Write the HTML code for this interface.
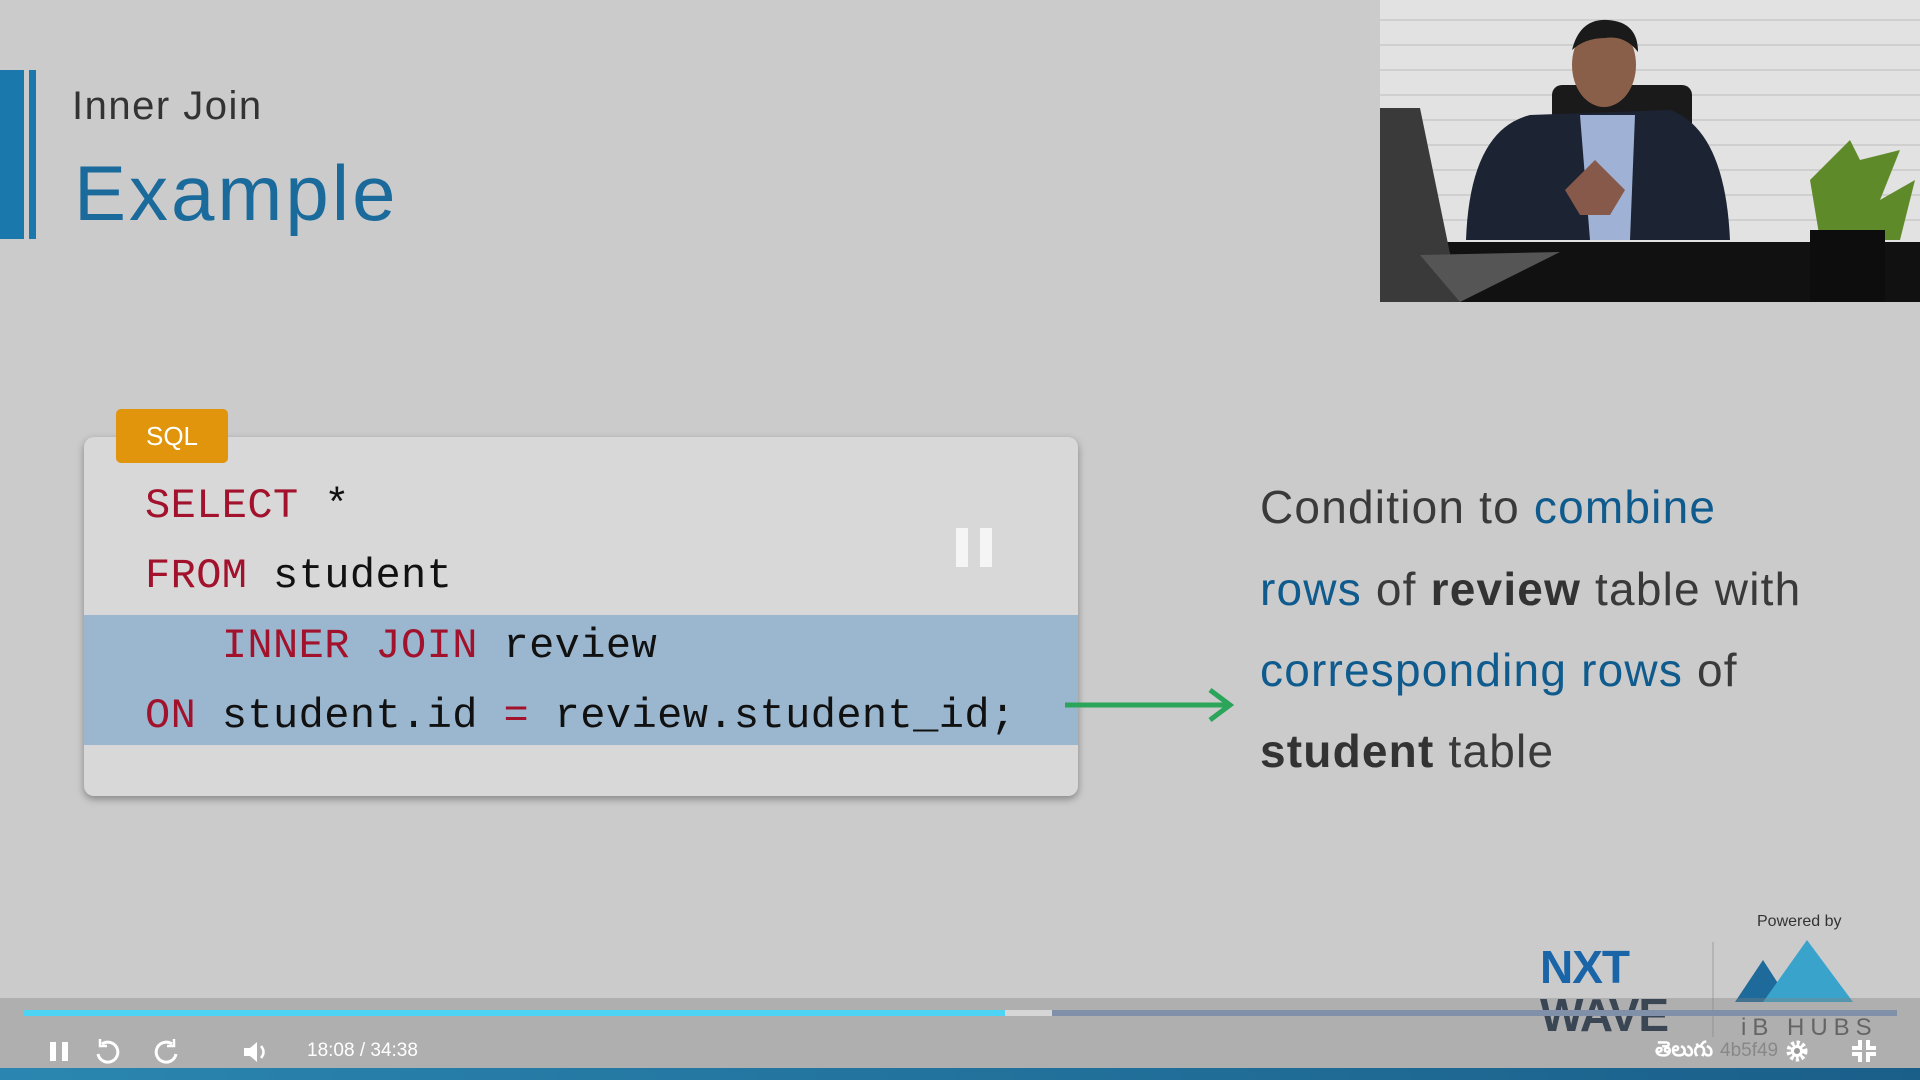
<!DOCTYPE html>
<html><head><meta charset="utf-8"><style>
*{margin:0;padding:0;box-sizing:border-box}
body{width:1920px;height:1080px;overflow:hidden;background:#cbcbcb;position:relative;font-family:"Liberation Sans",sans-serif}
.abs{position:absolute}
.mono{font-family:"Liberation Mono",monospace;font-size:42px;color:#111;white-space:pre;letter-spacing:0.4px}
.kw{color:#a3122c}
.rt{font-size:46px;color:#3a3a3a;white-space:nowrap;letter-spacing:1.2px}
.bl{color:#0f5b8e}
.bd{font-weight:bold;color:#333}
</style></head><body>
<div class="abs" style="left:0;top:70px;width:24px;height:169px;background:#1b78ad"></div>
<div class="abs" style="left:29px;top:70px;width:7px;height:169px;background:#1b78ad"></div>
<div class="abs" style="left:72px;top:84px;font-size:40px;color:#333;letter-spacing:1.5px">Inner Join</div>
<div class="abs" style="left:74px;top:148px;font-size:78px;color:#1a6a9c;letter-spacing:3px">Example</div>

<!-- video -->
<svg class="abs" style="left:1380px;top:0" width="540" height="302">
<rect width="540" height="302" fill="#e2e2e2"/>
<g stroke="#cfcfcf" stroke-width="2">
<line x1="0" y1="20" x2="540" y2="20"/><line x1="0" y1="45" x2="540" y2="45"/><line x1="0" y1="70" x2="540" y2="70"/><line x1="0" y1="95" x2="540" y2="95"/><line x1="0" y1="120" x2="540" y2="120"/><line x1="0" y1="145" x2="540" y2="145"/><line x1="0" y1="170" x2="540" y2="170"/><line x1="0" y1="195" x2="540" y2="195"/><line x1="0" y1="220" x2="540" y2="220"/></g>
<rect x="0" y="242" width="540" height="60" fill="#111"/>
<path d="M0 108 L40 108 L80 302 L0 302Z" fill="#3a3a3a"/>
<path d="M40 255 L180 252 L80 302Z" fill="#555"/>
<rect x="172" y="85" width="140" height="80" rx="10" fill="#1a1a1a"/>
<path d="M86 240 Q90 130 150 115 L290 110 Q345 130 350 240Z" fill="#1c2333"/>
<path d="M200 115 L255 115 L250 240 L210 240Z" fill="#9fb2d6"/>
<ellipse cx="224" cy="65" rx="32" ry="42" fill="#8a5f4a"/>
<path d="M192 50 Q200 18 228 20 Q258 22 258 52 Q245 35 225 38 Q205 38 192 50Z" fill="#1a1a1a"/>
<path d="M185 190 L215 160 L245 190 L230 215 L200 215Z" fill="#86594a"/>
<path d="M430 180 L470 140 L480 160 L520 150 L500 200 L535 180 L520 240 L440 240Z" fill="#5e8a2a"/>
<rect x="430" y="230" width="75" height="72" fill="#0d0d0d"/>
</svg>

<!-- code box -->
<div class="abs" style="left:84px;top:437px;width:994px;height:359px;background:#d8d8d8;border-radius:10px;box-shadow:0 3px 8px rgba(0,0,0,.35)"></div>
<div class="abs" style="left:84px;top:615px;width:994px;height:130px;background:#9bb7cf"></div>
<div class="abs" style="left:116px;top:409px;width:112px;height:54px;background:#e0950d;border-radius:5px;color:#fff;font-size:26px;text-align:center;line-height:54px">SQL</div>
<div class="abs mono" style="left:145px;top:482px"><span class="kw">SELECT</span> *</div>
<div class="abs mono" style="left:145px;top:552px"><span class="kw">FROM</span> student</div>
<div class="abs mono" style="left:145px;top:622px">   <span class="kw">INNER JOIN</span> review</div>
<div class="abs mono" style="left:145px;top:692px"><span class="kw">ON</span> student.id <span class="kw">=</span> review.student_id;</div>
<div class="abs" style="left:956px;top:528px;width:12px;height:39px;background:rgba(255,255,255,.75)"></div>
<div class="abs" style="left:980px;top:528px;width:12px;height:39px;background:rgba(255,255,255,.75)"></div>

<!-- arrow -->
<svg class="abs" style="left:1060px;top:685px" width="180" height="40">
<line x1="5" y1="20" x2="168" y2="20" stroke="#2aa55a" stroke-width="5"/>
<path d="M150 5 L170 20 L150 35" fill="none" stroke="#2aa55a" stroke-width="5"/>
</svg>

<div class="abs rt" style="left:1260px;top:480px">Condition to <span class="bl">combine</span></div>
<div class="abs rt" style="left:1260px;top:562px"><span class="bl">rows</span> of <span class="bd">review</span> table with</div>
<div class="abs rt" style="left:1260px;top:643px"><span class="bl">corresponding rows</span> of</div>
<div class="abs rt" style="left:1260px;top:724px"><span class="bd">student</span> table</div>

<!-- logos -->
<div class="abs" style="left:1757px;top:913px;font-size:16px;color:#333">Powered by</div>
<div class="abs" style="left:1540px;top:940px;font-size:46px;font-weight:bold;color:#1a64a8;letter-spacing:-1px">NXT</div>
<div class="abs" style="left:1540px;top:988px;font-size:46px;font-weight:bold;color:#0f2238;letter-spacing:-1px">WAVE</div>
<div class="abs" style="left:1712px;top:942px;width:2px;height:95px;background:#b5b5b5"></div>
<svg class="abs" style="left:1735px;top:940px" width="130" height="70">
<path d="M0 62 L28 20 L55 62Z" fill="#1e6a9a"/>
<path d="M28 62 L72 0 L118 62Z" fill="#3aa3cc"/>
</svg>
<div class="abs" style="left:1741px;top:1014px;font-size:24px;color:#555;letter-spacing:6px">iB HUBS</div>

<!-- control overlay -->
<div class="abs" style="left:0;top:998px;width:1920px;height:70px;background:rgba(130,130,130,.38)"></div>
<div class="abs" style="left:0;top:1068px;width:1920px;height:12px;background:linear-gradient(90deg,#2a86b0,#1a5f8a)"></div>
<div class="abs" style="left:24px;top:1010px;width:981px;height:6px;background:#4dd4f5"></div>
<div class="abs" style="left:1005px;top:1010px;width:47px;height:6px;background:#d6d6d6"></div>
<div class="abs" style="left:1052px;top:1010px;width:845px;height:6px;background:#8090a8"></div>
<div class="abs" style="left:50px;top:1042px;width:6px;height:19px;background:#fff"></div>
<div class="abs" style="left:62px;top:1042px;width:6px;height:19px;background:#fff"></div>
<svg class="abs" style="left:94px;top:1038px" width="150" height="28" fill="none" stroke="#fff" stroke-width="3">
<path d="M8 6 A10 10 0 1 1 4 16"/><path d="M6 1 L6 8 L13 8" stroke-width="2.5"/>
<path d="M78 6 A10 10 0 1 0 82 16"/><path d="M80 1 L80 8 L73 8" stroke-width="2.5"/>
</svg>
<svg class="abs" style="left:242px;top:1039px" width="30" height="26"><path d="M2 9 H8 L15 3 V23 L8 17 H2Z" fill="#fff"/><path d="M19 7 Q24 13 19 19" stroke="#fff" stroke-width="2.5" fill="none"/></svg>
<div class="abs" style="left:307px;top:1040px;font-size:19px;color:#fff">18:08 / 34:38</div>
<div class="abs" style="left:1655px;top:1038px;font-size:21px;color:#fff;font-weight:bold;font-family:'Liberation Sans','Noto Sans CJK SC',sans-serif">తెలుగు</div>
<div class="abs" style="left:1720px;top:1040px;font-size:19px;color:#888">4b5f49</div>
<svg class="abs" style="left:1785px;top:1039px" width="24" height="24"><circle cx="12" cy="12" r="8" fill="none" stroke="#fff" stroke-width="5" stroke-dasharray="3 2.3"/><circle cx="12" cy="12" r="6" fill="#fff"/><circle cx="12" cy="12" r="3" fill="#999"/></svg>
<svg class="abs" style="left:1852px;top:1040px" width="24" height="22" fill="none" stroke="#fff" stroke-width="4"><path d="M8 0 V8 H0 M16 0 V8 H24 M8 22 V14 H0 M16 22 V14 H24"/></svg>
</body></html>
